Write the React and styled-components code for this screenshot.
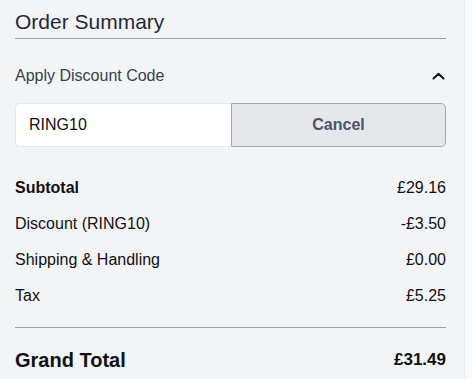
import React from 'react'
import styled, { createGlobalStyle } from 'styled-components'

const GlobalStyle = createGlobalStyle`
  html, body {
    margin: 0;
    padding: 0;
    background: #f8f9fa;
    font-family: "Liberation Sans", Arial, sans-serif;
  }
`

const lines = [
  { label: 'Subtotal', value: '£29.16', strong: true },
  { label: 'Discount (RING10)', value: '-£3.50' },
  { label: 'Shipping & Handling', value: '£0.00' },
  { label: 'Tax', value: '£5.25' },
]

const App = () => {
  return (
    <>
      <GlobalStyle />
      <Panel>
        <Title>Order Summary</Title>

        <DiscountHeader>
          <span>Apply Discount Code</span>
          <svg width="13" height="8" viewBox="0 0 13 8" fill="none">
            <path d="M1.5 6.5 L6.5 1.8 L11.5 6.5" stroke="#111" strokeWidth="2" strokeLinecap="round" strokeLinejoin="round" />
          </svg>
        </DiscountHeader>

        <CodeBox>
          <CodeInput defaultValue="RING10" />
          <CancelButton>Cancel</CancelButton>
        </CodeBox>

        <Lines>
          {lines.map((l) => (
            <Line key={l.label} $strong={l.strong}>
              <span>{l.label}</span>
              <Amount>{l.value}</Amount>
            </Line>
          ))}
        </Lines>

        <Total>
          <span>Grand Total</span>
          <TotalAmount>£31.49</TotalAmount>
        </Total>
      </Panel>
    </>
  )
}

const Panel = styled.div`
  width: 431px;
  min-height: 379px;
  padding: 0 18px 0 15px;
  background: #f3f4f6;
  border-right: 1px solid #e9eaec;
  box-sizing: content-box;
`

const Title = styled.h2`
  margin: 0;
  padding: 10px 0 4px;
  font-size: 21px;
  line-height: 24px;
  font-weight: 400;
  color: #1f2937;
  border-bottom: 1px solid #9ca3af;
`

const DiscountHeader = styled.div`
  display: flex;
  justify-content: space-between;
  align-items: center;
  margin-top: 27px;
  font-size: 16px;
  line-height: 20px;
  color: #374151;

  svg {
    margin-right: 1px;
  }
`

const CodeBox = styled.div`
  display: grid;
  grid-template-columns: 216px 1fr;
  height: 44px;
  margin-top: 17px;
  border-radius: 5px;
  box-sizing: border-box;
`

const CodeInput = styled.input`
  border: 1px solid #e5e7eb;
  border-right: none;
  border-radius: 5px 0 0 5px;
  background: #fff;
  padding: 0 13px;
  font-family: inherit;
  font-size: 16px;
  color: #111;
  outline: none;
  min-width: 0;
`

const CancelButton = styled.button`
  border: 1px solid #a3a7ae;
  border-radius: 0 5px 5px 0;
  background: #e5e7eb;
  font-family: inherit;
  font-size: 16px;
  font-weight: 700;
  color: #4b5563;
  cursor: pointer;
`

const Lines = styled.div`
  display: flex;
  flex-direction: column;
  gap: 16px;
  margin-top: 31px;
  padding-bottom: 21px;
  border-bottom: 1px solid #9ca3af;
`

const Line = styled.div`
  display: flex;
  justify-content: space-between;
  font-size: 16px;
  line-height: 20px;
  color: #111;
  font-weight: ${(p) => (p.$strong ? 700 : 400)};
`

const Amount = styled.span`
  font-weight: 400;
`

const Total = styled.div`
  display: flex;
  justify-content: space-between;
  align-items: center;
  margin-top: 20px;
  font-size: 20px;
  line-height: 24px;
  font-weight: 700;
  color: #111;
`

const TotalAmount = styled.span`
  font-size: 17px;
`

export default App
